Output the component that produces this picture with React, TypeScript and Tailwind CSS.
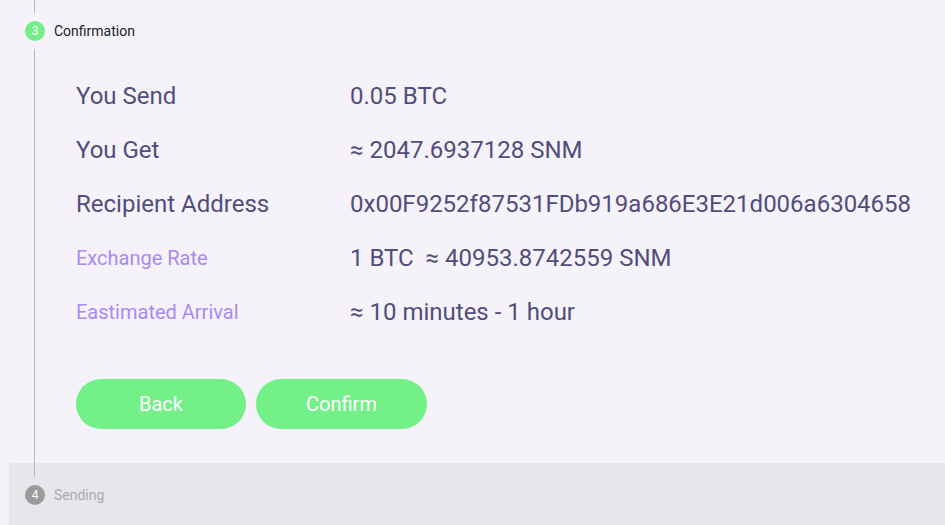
import React from "react";

const rows: { label: string; value: string; small?: boolean }[] = [
  { label: "You Send", value: "0.05 BTC" },
  { label: "You Get", value: "≈ 2047.6937128 SNM" },
  { label: "Recipient Address", value: "0x00F9252f87531FDb919a686E3E21d006a6304658" },
  { label: "Exchange Rate", value: "1 BTC  ≈ 40953.8742559 SNM", small: true },
  { label: "Eastimated Arrival", value: "≈ 10 minutes - 1 hour", small: true },
];

export default function App() {
  return (
    <div
      className="relative w-[945px] h-[525px] overflow-hidden bg-[#f5f3f9] flex flex-col"
      style={{ fontFamily: "Roboto, 'Noto Sans', sans-serif" }}
    >
      {/* vertical timeline line */}
      <div className="absolute left-[34px] top-0 h-[13px] w-px bg-[#b9b7bd]" />
      <div className="absolute left-[34px] top-[49px] h-[428px] w-px bg-[#b9b7bd] z-10" />

      {/* step 3 header */}
      <div className="flex items-center pl-[25px] pt-[21px]">
        <div className="w-[20px] h-[20px] rounded-full bg-[#74ef88] text-white text-[12px] flex items-center justify-center">
          3
        </div>
        <span className="ml-[9px] text-[14px] leading-[20px] text-[#1c1c22]">Confirmation</span>
      </div>

      {/* rows */}
      <div className="mt-[28px] pl-[76px] flex flex-col">
        {rows.map((r) => (
          <div key={r.label} className="h-[54px] flex items-center">
            <div
              className={
                r.small
                  ? "w-[274px] text-[20px] text-[#a68bf2]"
                  : "w-[274px] text-[24px] text-[#524d7b]"
              }
            >
              {r.label}
            </div>
            <div className="text-[24px] text-[#524d7b] whitespace-pre">{r.value}</div>
          </div>
        ))}
      </div>

      {/* buttons */}
      <div className="mt-[40px] pl-[76px] flex gap-[10px]">
        <button className="w-[170px] h-[50px] rounded-full bg-[#74f088] text-white text-[20px]">
          Back
        </button>
        <button className="w-[171px] h-[50px] rounded-full bg-[#74f088] text-white text-[20px]">
          Confirm
        </button>
      </div>

      {/* step 4 */}
      <div className="mt-[34px] ml-[9px] flex-1 bg-[#e8e6eb] flex items-start pl-[16px] pt-[22px]">
        <div className="w-[20px] h-[20px] rounded-full bg-[#9b9b9b] text-white text-[12px] flex items-center justify-center">
          4
        </div>
        <span className="ml-[9px] text-[14px] leading-[20px] text-[#ababab]">Sending</span>
      </div>
    </div>
  );
}
